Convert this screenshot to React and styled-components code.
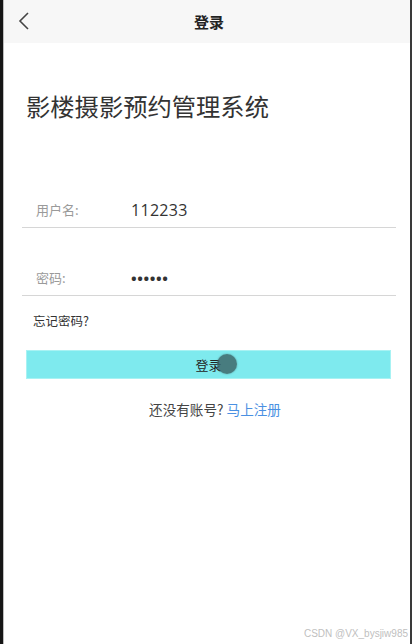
import React from "react";
import styled, { createGlobalStyle } from "styled-components";

const GlobalStyle = createGlobalStyle`
  html, body {
    margin: 0;
    padding: 0;
    background: #fff;
  }
  body {
    font-family: "Noto Sans", "Noto Sans CJK SC", sans-serif;
    color: #333;
  }
`;

const App = () => {
  return (
    <>
      <GlobalStyle />
      <Frame>
        <Header>
          <BackButton>
            <svg width="12" height="18" viewBox="0 0 12 18">
              <polyline
                points="10,1 2,9 10,17"
                fill="none"
                stroke="#444"
                strokeWidth="1.6"
              />
            </svg>
          </BackButton>
          <HeaderTitle>登录</HeaderTitle>
          <span />
        </Header>
        <Content>
          <Title>影楼摄影预约管理系统</Title>
          <Form>
            <Field>
              <Label>用户名:</Label>
              <Value>112233</Value>
            </Field>
            <Field>
              <Label>密码:</Label>
              <Value dots>••••••</Value>
            </Field>
          </Form>
          <Forgot>忘记密码?</Forgot>
          <LoginButton>
            登录
            <Cursor />
          </LoginButton>
          <Register>
            还没有账号? <RegisterLink>马上注册</RegisterLink>
          </Register>
        </Content>
        <Watermark>CSDN @VX_bysjiw985</Watermark>
      </Frame>
    </>
  );
};

const Frame = styled.div`
  position: relative;
  box-sizing: border-box;
  width: 412px;
  height: 644px;
  border-left: 3px solid #151515;
  border-right: 2px solid #3a3a3a;
  box-shadow: inset 1px 0 0 #bdbdbd;
  display: flex;
  flex-direction: column;
  background: #fff;
`;

const Header = styled.div`
  height: 43px;
  background: #f7f7f7;
  display: grid;
  grid-template-columns: 40px 1fr 40px;
  align-items: center;
  margin-left: 1px;
`;

const BackButton = styled.div`
  display: flex;
  align-items: center;
  justify-content: center;
  margin-top: -2px;
`;

const HeaderTitle = styled.div`
  text-align: center;
  font-size: 15px;
  font-weight: 700;
  color: #222;
  font-family: "Noto Sans CJK SC", sans-serif;
  margin-left: 4px;
`;

const Content = styled.div`
  display: flex;
  flex-direction: column;
  flex: 1;
  padding: 0 14px 0 19px;
`;

const Title = styled.h1`
  margin: 46px 0 0 4px;
  font-size: 24.3px;
  line-height: 34px;
  font-weight: 400;
  color: #333;
  font-family: "Noto Sans CJK SC", sans-serif;
`;

const Form = styled.div`
  display: flex;
  flex-direction: column;
  margin-top: 36px;
`;

const Field = styled.div`
  height: 60px;
  display: grid;
  grid-template-columns: 95px 1fr;
  align-items: end;
  padding: 0 0 7px 14px;
  box-sizing: content-box;
  border-bottom: 1px solid #d6d6d6;
  &:first-child {
    height: 61px;
  }
`;

const Label = styled.span`
  font-size: 13px;
  line-height: 20px;
  color: #9a9a9a;
  font-family: "Noto Sans CJK SC", sans-serif;
`;

const Value = styled.span`
  font-size: ${(p) => (p.dots ? "15px" : "16px")};
  font-weight: ${(p) => (p.dots ? 700 : 400)};
  line-height: 20px;
  color: #333;
  letter-spacing: ${(p) => (p.dots ? "0.6px" : "0.3px")};
  font-family: "Open Sans", "Noto Sans", sans-serif;
`;

const Forgot = styled.div`
  margin: 16px 0 0 11px;
  font-size: 12.5px;
  line-height: 18px;
  color: #333;
  font-family: "Noto Sans CJK SC", sans-serif;
`;

const LoginButton = styled.div`
  position: relative;
  margin: 20px 0 0 4px;
  width: 365px;
  height: 29px;
  background: #7eeaee;
  border: 1px solid #a8f2f3;
  box-sizing: border-box;
  display: flex;
  align-items: center;
  justify-content: center;
  font-size: 13px;
  color: #222;
  font-family: "Noto Sans CJK SC", sans-serif;
`;

const Cursor = styled.span`
  position: absolute;
  left: 190px;
  top: 3px;
  width: 20px;
  height: 20px;
  border-radius: 50%;
  background: rgba(60, 100, 102, 0.82);
  box-shadow: 0 0 2px rgba(60, 100, 102, 0.6);
`;

const Register = styled.div`
  margin-top: 21px;
  text-align: center;
  font-size: 13.6px;
  line-height: 18px;
  color: #444;
  font-family: "Noto Sans CJK SC", sans-serif;
  padding-left: 12px;
`;

const RegisterLink = styled.span`
  color: #4a90e2;
`;

const Watermark = styled.div`
  position: absolute;
  right: 2px;
  bottom: 5px;
  font-size: 10px;
  color: #c0c0c0;
  font-family: "Liberation Sans", Arial, sans-serif;
`;

export default App;
